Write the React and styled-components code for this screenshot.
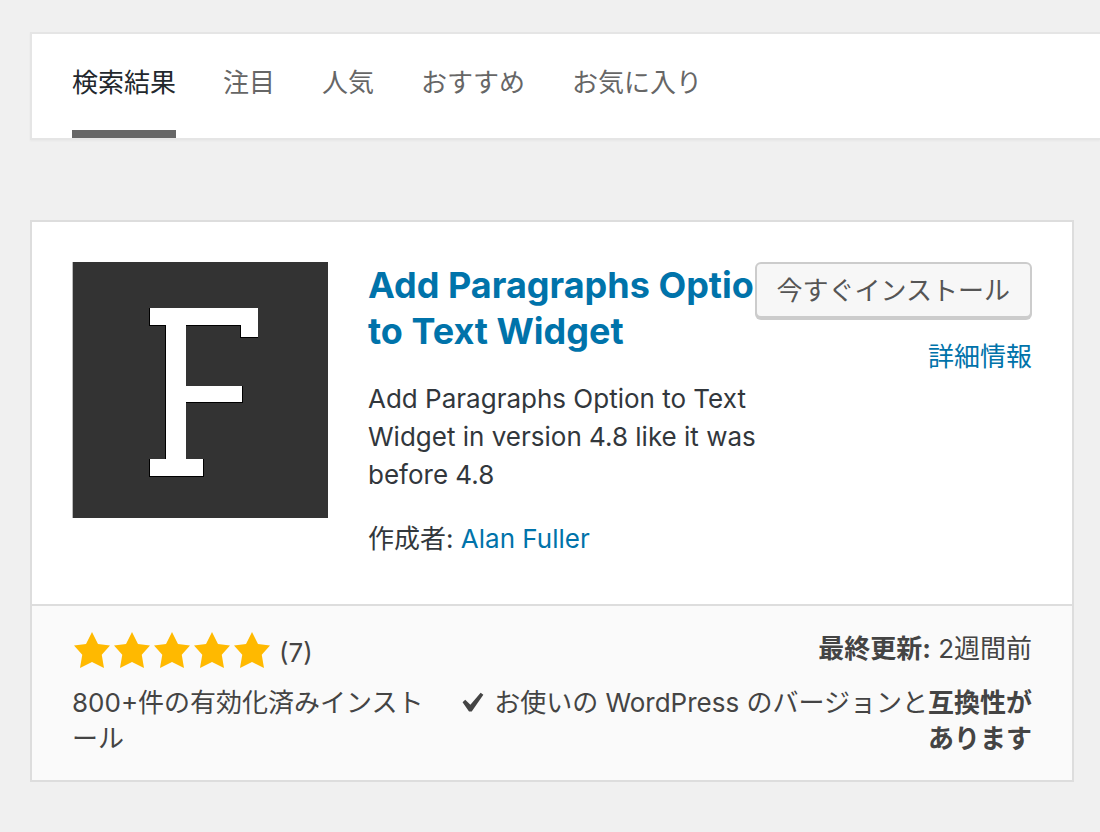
import React from 'react';
import styled, { createGlobalStyle } from 'styled-components';

const GlobalStyle = createGlobalStyle`
*{
box-sizing:border-box;
}
body{
margin:0;
background-color:#f0f0f0;
color:#444;
font-family:Inter, "Noto Sans CJK JP", sans-serif;
font-size:26px;
line-height:36px;
}
a{
color:#0073aa;
text-decoration:none;
}
`;

const Page = styled.main`
padding:32px 0 50px 30px;
`;

const FilterBar = styled.nav`
display:flex;
gap:47px;
padding:0 40px;
background-color:#fff;
border:2px solid #e5e5e5;
border-right:none;
box-shadow:0 1px 2px rgba(0,0,0,0.04);
`;

const FilterLink = styled.a`
padding:31px 0 29px;
border-bottom:8px solid ${({ $current }) => ($current ? '#666' : 'transparent')};
color:${({ $current }) => ($current ? '#23282d' : '#666')};
`;

const Card = styled.article`
margin:80px 26px 0 0;
background-color:#fff;
border:2px solid #ddd;
`;

const CardTop = styled.div`
position:relative;
display:flex;
gap:40px;
padding:40px 40px 46px;
`;

const Icon = styled.svg`
flex:none;
width:256px;
height:256px;
`;

const Details = styled.div`
flex:1;
color:#32373c;
`;

const Name = styled.h3`
margin:0 228px 26px 0;
font-size:36px;
font-weight:700;
line-height:46px;
`;

const Text = styled.p`
margin:0 256px 26px 0;
line-height:38px;
`;

const Author = styled.p`
margin:0;
line-height:38px;
`;

/* sits over the plugin name when the name is long */
const Actions = styled.div`
position:absolute;
top:40px;
right:40px;
display:flex;
flex-direction:column;
align-items:flex-end;
gap:21px;
`;

const InstallButton = styled.button`
height:56px;
padding:1px 20px 0;
background-color:#f7f7f7;
border:2px solid #ccc;
border-radius:6px;
box-shadow:0 2px 0 #ccc;
color:#555;
font:inherit;
`;

const CardBottom = styled.div`
display:grid;
grid-template-columns:38% 60%;
justify-content:space-between;
row-gap:14px;
padding:24px 40px 23px;
background-color:#fafafa;
border-top:2px solid #ddd;
`;

const Cell = styled.div`
padding-top:1px;
text-align:${({ $right }) => ($right ? 'right' : 'left')};
`;

const Rating = styled.div`
display:flex;
align-items:flex-end;
height:40px;
`;

const Star = styled.svg`
width:40px;
height:40px;
fill:#ffb900;
`;

const Count = styled.span`
margin-left:7px;
line-height:34px;
`;

const Check = styled.svg`
width:22px;
height:20px;
margin-right:10px;
fill:#444;
`;

const filters = ['検索結果', '注目', '人気', 'おすすめ', 'お気に入り'];

const PluginIcon = () => (
    <Icon viewBox="0 0 256 256" aria-hidden="true">
        <rect x="1" width="255" height="256" fill="#333" />
        <rect width="1" height="256" fill="#bbb" />
        <g fill="#000">
            <rect x="77" y="46" width="108" height="18" />
            <rect x="168" y="46" width="18" height="30" />
            <rect x="93" y="46" width="21" height="168" />
            <rect x="94" y="124" width="77" height="17" />
            <rect x="77" y="197" width="55" height="18" />
        </g>
        <g fill="#fff">
            <rect x="78" y="46" width="108" height="17" />
            <rect x="169" y="46" width="17" height="29" />
            <rect x="94" y="46" width="20" height="168" />
            <rect x="94" y="124" width="76" height="16" />
            <rect x="78" y="197" width="53" height="17" />
        </g>
    </Icon>
)

const App = () => {
    return (
        <Page lang="ja">
            <GlobalStyle />
            <FilterBar>
                {filters.map((name, i) => (
                    <FilterLink key={name} href="#" $current={i === 0}>{name}</FilterLink>
                ))}
            </FilterBar>
            <Card>
                <CardTop>
                    <PluginIcon />
                    <Details>
                        <Name><a href="#">Add Paragraphs Option to Text Widget</a></Name>
                        <Text>Add Paragraphs Option to Text Widget in version 4.8 like it was before 4.8</Text>
                        <Author>作成者: <a href="#">Alan Fuller</a></Author>
                    </Details>
                    <Actions>
                        <InstallButton type="button">今すぐインストール</InstallButton>
                        <a href="#">詳細情報</a>
                    </Actions>
                </CardTop>
                <CardBottom>
                    <Rating>
                        {[1, 2, 3, 4, 5].map((n) => (
                            <Star key={n} viewBox="0 0 20 20" aria-hidden="true">
                                <path d="M10 1l3 6 6 .75-4.12 4.62L16 19l-6-3-6 3 1.13-6.63L1 7.75 7 7z" />
                            </Star>
                        ))}
                        <Count>(7)</Count>
                    </Rating>
                    <Cell $right><strong>最終更新:</strong> 2週間前</Cell>
                    <Cell>800+件の有効化済みインストール</Cell>
                    <Cell $right>
                        <Check viewBox="5.5 4.5 11 10" aria-hidden="true">
                            <path d="M14.83 4.89l1.34.94-5.81 8.38H9.02L5.78 9.67l1.34-1.25 2.57 2.4z" />
                        </Check>
                        お使いの WordPress のバージョンと<strong>互換性があります</strong>
                    </Cell>
                </CardBottom>
            </Card>
        </Page>
    )
}

export default App;
